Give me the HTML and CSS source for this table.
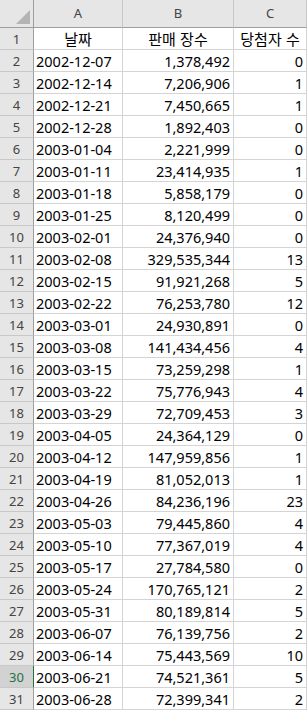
FILE: index.html
```html
<!DOCTYPE html>
<html lang="ko">
<head>
<meta charset="utf-8">
<title>Sheet</title>
<link rel="stylesheet" href="styles.css">
</head>
<body>
<div class="sheet">
  <div class="row head">
    <div class="corner"><svg width="14" height="14" viewBox="0 0 14 14"><polygon points="14,0 14,14 0,14" fill="#b4b4b4"/></svg></div>
    <div class="colh">A</div><div class="colh">B</div><div class="colh">C</div>
  </div>
  <div class="row"><div class="rh">1</div><div class="c ctr">날짜</div><div class="c ctr">판매 장수</div><div class="c ctr">당첨자 수</div></div>
  <div class="row"><div class="rh">2</div><div class="c">2002-12-07</div><div class="c num">1,378,492</div><div class="c num">0</div></div>
  <div class="row"><div class="rh">3</div><div class="c">2002-12-14</div><div class="c num">7,206,906</div><div class="c num">1</div></div>
  <div class="row"><div class="rh">4</div><div class="c">2002-12-21</div><div class="c num">7,450,665</div><div class="c num">1</div></div>
  <div class="row"><div class="rh">5</div><div class="c">2002-12-28</div><div class="c num">1,892,403</div><div class="c num">0</div></div>
  <div class="row"><div class="rh">6</div><div class="c">2003-01-04</div><div class="c num">2,221,999</div><div class="c num">0</div></div>
  <div class="row"><div class="rh">7</div><div class="c">2003-01-11</div><div class="c num">23,414,935</div><div class="c num">1</div></div>
  <div class="row"><div class="rh">8</div><div class="c">2003-01-18</div><div class="c num">5,858,179</div><div class="c num">0</div></div>
  <div class="row"><div class="rh">9</div><div class="c">2003-01-25</div><div class="c num">8,120,499</div><div class="c num">0</div></div>
  <div class="row"><div class="rh">10</div><div class="c">2003-02-01</div><div class="c num">24,376,940</div><div class="c num">0</div></div>
  <div class="row"><div class="rh">11</div><div class="c">2003-02-08</div><div class="c num">329,535,344</div><div class="c num">13</div></div>
  <div class="row"><div class="rh">12</div><div class="c">2003-02-15</div><div class="c num">91,921,268</div><div class="c num">5</div></div>
  <div class="row"><div class="rh">13</div><div class="c">2003-02-22</div><div class="c num">76,253,780</div><div class="c num">12</div></div>
  <div class="row"><div class="rh">14</div><div class="c">2003-03-01</div><div class="c num">24,930,891</div><div class="c num">0</div></div>
  <div class="row"><div class="rh">15</div><div class="c">2003-03-08</div><div class="c num">141,434,456</div><div class="c num">4</div></div>
  <div class="row"><div class="rh">16</div><div class="c">2003-03-15</div><div class="c num">73,259,298</div><div class="c num">1</div></div>
  <div class="row"><div class="rh">17</div><div class="c">2003-03-22</div><div class="c num">75,776,943</div><div class="c num">4</div></div>
  <div class="row"><div class="rh">18</div><div class="c">2003-03-29</div><div class="c num">72,709,453</div><div class="c num">3</div></div>
  <div class="row"><div class="rh">19</div><div class="c">2003-04-05</div><div class="c num">24,364,129</div><div class="c num">0</div></div>
  <div class="row"><div class="rh">20</div><div class="c">2003-04-12</div><div class="c num">147,959,856</div><div class="c num">1</div></div>
  <div class="row"><div class="rh">21</div><div class="c">2003-04-19</div><div class="c num">81,052,013</div><div class="c num">1</div></div>
  <div class="row"><div class="rh">22</div><div class="c">2003-04-26</div><div class="c num">84,236,196</div><div class="c num">23</div></div>
  <div class="row"><div class="rh">23</div><div class="c">2003-05-03</div><div class="c num">79,445,860</div><div class="c num">4</div></div>
  <div class="row"><div class="rh">24</div><div class="c">2003-05-10</div><div class="c num">77,367,019</div><div class="c num">4</div></div>
  <div class="row"><div class="rh">25</div><div class="c">2003-05-17</div><div class="c num">27,784,580</div><div class="c num">0</div></div>
  <div class="row"><div class="rh">26</div><div class="c">2003-05-24</div><div class="c num">170,765,121</div><div class="c num">2</div></div>
  <div class="row"><div class="rh">27</div><div class="c">2003-05-31</div><div class="c num">80,189,814</div><div class="c num">5</div></div>
  <div class="row"><div class="rh">28</div><div class="c">2003-06-07</div><div class="c num">76,139,756</div><div class="c num">2</div></div>
  <div class="row"><div class="rh">29</div><div class="c">2003-06-14</div><div class="c num">75,443,569</div><div class="c num">10</div></div>
  <div class="row"><div class="rh sel">30</div><div class="c">2003-06-21</div><div class="c num">74,521,361</div><div class="c num">5</div></div>
  <div class="row"><div class="rh">31</div><div class="c">2003-06-28</div><div class="c num">72,399,341</div><div class="c num">2</div></div>
</div>
</body>
</html>
```
FILE: styles.css
```css
html, body {
  margin: 0;
  padding: 0;
  background: #ffffff;
}
.sheet {
  width: 307px;
  font-family: "Noto Sans", "Noto Sans CJK KR", sans-serif;
  color: #000;
}
.row {
  display: grid;
  grid-template-columns: 34px 89px 111px 73px;
  height: 22px;
}
.row > div {
  box-sizing: border-box;
  border-right: 1px solid #d4d4d4;
  border-bottom: 1px solid #d4d4d4;
  white-space: nowrap;
  overflow: hidden;
}
.row.head {
  height: 28px;
}
.corner {
  background: #e6e6e6;
  display: flex;
  align-items: flex-end;
  justify-content: flex-end;
  padding: 0 3px 3px 0;
}
.corner svg { display: block; }
.row.head > div {
  background: #e6e6e6;
  border-right-color: #c6c6c6;
  border-bottom-color: #9e9e9e;
}
.row.head > .corner {
  border-right-color: #9e9e9e;
}
.colh {
  text-align: center;
  font-size: 13px;
  line-height: 26px;
  color: #444;
}
.rh {
  background: #e6e6e6;
  border-right-color: #9e9e9e !important;
  border-bottom-color: #c8c8c8 !important;
  text-align: center;
  font-size: 13px;
  line-height: 23px;
  color: #444;
}
.rh.sel {
  background: #d2d2d2;
  color: #217346;
  border-right-color: #217346 !important;
}
.c {
  font-size: 14.5px;
  line-height: 22px;
  padding: 0 3px 0 2px;
}
.c.num {
  text-align: right;
}
.c.ctr {
  text-align: center;
  font-family: "Noto Sans CJK KR", sans-serif;
  font-size: 15px;
  padding: 0;
}
```
